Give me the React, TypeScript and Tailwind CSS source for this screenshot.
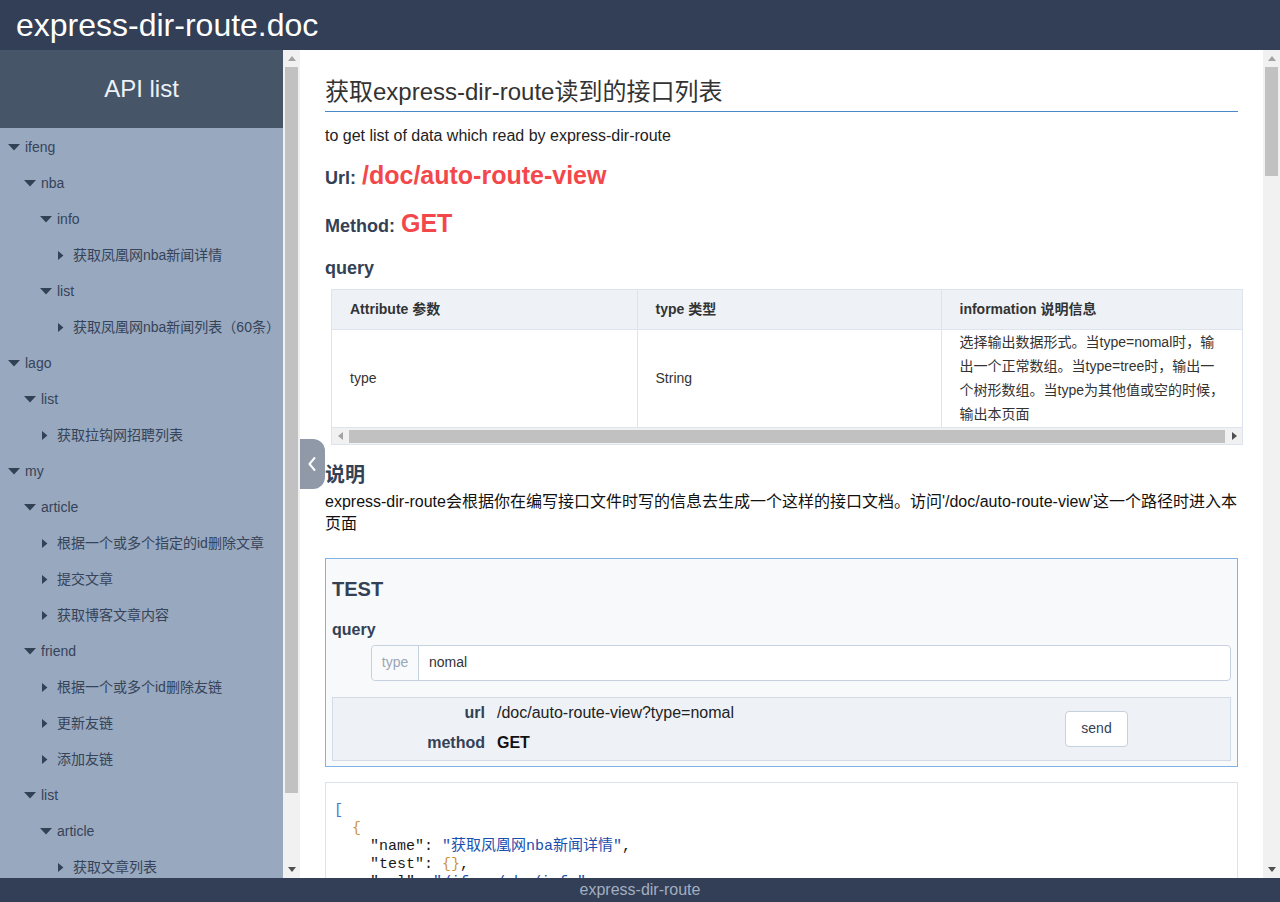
import React from "react";

const FONT = { fontFamily: '"Liberation Sans", Arial, "Noto Sans CJK SC", sans-serif' };
const MONO = { fontFamily: '"Liberation Mono", "Courier New", "Noto Sans CJK SC", monospace' };

type TreeItem = { label: string; level: number; open?: boolean };

const TREE: TreeItem[] = [
  { label: "ifeng", level: 0, open: true },
  { label: "nba", level: 1, open: true },
  { label: "info", level: 2, open: true },
  { label: "获取凤凰网nba新闻详情", level: 3 },
  { label: "list", level: 2, open: true },
  { label: "获取凤凰网nba新闻列表（60条）", level: 3 },
  { label: "lago", level: 0, open: true },
  { label: "list", level: 1, open: true },
  { label: "获取拉钩网招聘列表", level: 2 },
  { label: "my", level: 0, open: true },
  { label: "article", level: 1, open: true },
  { label: "根据一个或多个指定的id删除文章", level: 2 },
  { label: "提交文章", level: 2 },
  { label: "获取博客文章内容", level: 2 },
  { label: "friend", level: 1, open: true },
  { label: "根据一个或多个id删除友链", level: 2 },
  { label: "更新友链", level: 2 },
  { label: "添加友链", level: 2 },
  { label: "list", level: 1, open: true },
  { label: "article", level: 2, open: true },
  { label: "获取文章列表", level: 3 },
  { label: "friend", level: 2, open: true },
  { label: "获取友链列表", level: 3 },
];

const PAD = ["pl-[8px]", "pl-[24px]", "pl-[40px]", "pl-[56px]"];

const APIS = [
  { name: "获取凤凰网nba新闻详情", url: "/ifeng/nba/info", q: { id: "新闻id" } },
  { name: "获取凤凰网nba新闻列表（60条）", url: "/ifeng/nba/list", q: { page: "页码" } },
  { name: "获取拉钩网招聘列表", url: "/lago/list", q: { kd: "关键词", city: "城市" } },
  { name: "根据一个或多个指定的id删除文章", url: "/my/article/delete", q: { ids: "文章id" } },
  { name: "提交文章", url: "/my/article/submit", q: { title: "标题", content: "内容" } },
  { name: "获取博客文章内容", url: "/my/article/get", q: { id: "文章id" } },
  { name: "根据一个或多个id删除友链", url: "/my/friend/delete", q: { ids: "友链id" } },
  { name: "更新友链", url: "/my/friend/update", q: { id: "友链id", name: "名称" } },
  { name: "添加友链", url: "/my/friend/add", q: { name: "名称", href: "地址" } },
  { name: "获取文章列表", url: "/my/list/article", q: { page: "页码" } },
  { name: "获取友链列表", url: "/my/list/friend", q: {} },
].map((a) => ({
  name: a.name,
  test: {},
  url: a.url,
  method: "GET",
  query: a.q,
}));

const JSON_LINES = JSON.stringify(APIS, null, 2).split("\n");

function Line({ text }: { text: string }) {
  const out: React.ReactNode[] = [];
  const re = /("(?:[^"\\]|\\.)*")(\s*:)?|([\[\]])|([{}])|([^"\[\]{}]+)/g;
  let m: RegExpExecArray | null;
  let k = 0;
  while ((m = re.exec(text))) {
    if (m[1]) {
      if (m[2]) {
        out.push(<span key={k++} className="text-[#1a1a1a]">{m[1]}</span>);
        out.push(<span key={k++} className="text-[#1a1a1a]">{m[2]}</span>);
      } else {
        out.push(<span key={k++} className="text-[#1c4fae]">{m[1]}</span>);
      }
    } else if (m[3]) {
      out.push(<span key={k++} className="text-[#3f7fd4]">{m[3]}</span>);
    } else if (m[4]) {
      out.push(<span key={k++} className="text-[#cf9240]">{m[4]}</span>);
    } else {
      out.push(<span key={k++} className="text-[#1a1a1a]">{m[5]}</span>);
    }
  }
  return <div className="h-[18px] leading-[18px]">{out}</div>;
}

function Caret({ open }: { open?: boolean }) {
  return (
    <span className="w-[12px] mr-[5px] flex items-center shrink-0">
      {open ? (
        <svg width="12" height="7" viewBox="0 0 12 7">
          <polygon points="0,0 12,0 6,6.5" fill="#334155" />
        </svg>
      ) : (
        <svg width="12" height="11" viewBox="0 0 12 11" className="ml-[2px]">
          <polygon points="0,0 6.5,5.5 0,11" fill="#334155" />
        </svg>
      )}
    </span>
  );
}

// classic scrollbar drawing (vertical)
function VBar({ thumb }: { thumb: string }) {
  return (
    <div className="w-[17px] shrink-0 bg-[#f1f1f1] flex flex-col">
      <div className="h-[17px] flex items-center justify-center">
        <svg width="8" height="5" viewBox="0 0 8 5">
          <polygon points="0,5 8,5 4,0" fill="#a3a3a3" />
        </svg>
      </div>
      <div className={`mx-[2px] bg-[#c1c1c1] ${thumb}`} />
      <div className="flex-1" />
      <div className="h-[17px] flex items-center justify-center">
        <svg width="8" height="5" viewBox="0 0 8 5">
          <polygon points="0,0 8,0 4,5" fill="#505050" />
        </svg>
      </div>
    </div>
  );
}

export default function App() {
  return (
    <div className="h-[902px] flex flex-col overflow-hidden bg-white" style={FONT}>
      {/* header */}
      <header className="h-[50px] shrink-0 bg-[#323f56] flex items-center pl-[16px]">
        <span className="text-white text-[32px] leading-none">express-dir-route.doc</span>
      </header>

      <div className="flex-1 min-h-0 flex relative">
        {/* sidebar */}
        <aside className="w-[300px] shrink-0 flex">
          <div className="w-[283px] overflow-hidden bg-[#97a8bf]">
            <div className="h-[78px] bg-[#465568] flex items-center justify-center text-[24px] text-[#edf1f6]">
              API list
            </div>
            <ul className="pt-[1px]">
              {TREE.map((t, i) => (
                <li
                  key={i}
                  className={`h-[36px] flex items-center text-[14px] text-[#364359] whitespace-nowrap ${PAD[t.level]}`}
                >
                  <Caret open={t.open} />
                  <span>{t.label}</span>
                </li>
              ))}
            </ul>
          </div>
          <VBar thumb="h-[726px]" />
        </aside>

        {/* collapse tab */}
        <div className="absolute left-[300px] top-[389px] w-[25px] h-[50px] bg-[#8f99a8] rounded-r-[12px] flex items-center justify-center">
          <svg width="10" height="16" viewBox="0 0 10 16" className="mr-[2px]">
            <path d="M7.5 2 L2.5 8 L7.5 14" fill="none" stroke="#fff" strokeWidth="2" strokeLinecap="round" strokeLinejoin="round" />
          </svg>
        </div>

        {/* main */}
        <main className="flex-1 min-w-0 flex bg-white">
          <div className="flex-1 overflow-hidden">
            <div className="ml-[25px] w-[913px] pt-[26px] pb-[40px]">
              <h1 className="text-[24px] leading-[32px] pb-[3px] border-b border-[#4a8acb] text-[#333]">
                获取express-dir-route读到的接口列表
              </h1>
              <p className="mt-[14px] text-[16px] leading-[20px] text-[#222]">
                to get list of data which read by express-dir-route
              </p>
              <div className="mt-[11px] h-[32px] flex items-baseline font-bold">
                <span className="text-[18px] text-[#334155]">Url:</span>
                <span className="ml-[6px] text-[25px] text-[#f3484b]">/doc/auto-route-view</span>
              </div>
              <div className="mt-[16px] h-[32px] flex items-baseline font-bold">
                <span className="text-[18px] text-[#334155]">Method:</span>
                <span className="ml-[6px] text-[25px] text-[#f3484b]">GET</span>
              </div>
              <h3 className="mt-[19px] text-[18px] leading-[24px] font-bold text-[#334155]">query</h3>

              <div className="mt-[9px] ml-[6px] w-[912px] border border-[#dde4ed] overflow-hidden">
                <table className="w-full border-collapse text-[14px] text-[#333]">
                  <thead>
                    <tr className="h-[39px] bg-[#eef2f7] border-b border-[#dde4ed]">
                      <th className="w-[305px] px-[18px] text-left font-bold border-r border-[#dde4ed]">Attribute 参数</th>
                      <th className="w-[304px] px-[18px] text-left font-bold border-r border-[#dde4ed]">type 类型</th>
                      <th className="px-[18px] text-left font-bold">information 说明信息</th>
                    </tr>
                  </thead>
                  <tbody>
                    <tr className="h-[98px] border-b border-[#dde4ed]">
                      <td className="px-[18px] border-r border-[#dde4ed]">type</td>
                      <td className="px-[18px] border-r border-[#dde4ed]">String</td>
                      <td className="px-[18px] leading-[24px] whitespace-nowrap">
                        选择输出数据形式。当type=nomal时，输
                        <br />
                        出一个正常数组。当type=tree时，输出一
                        <br />
                        个树形数组。当type为其他值或空的时候，
                        <br />
                        输出本页面
                      </td>
                    </tr>
                  </tbody>
                </table>
                {/* horizontal scrollbar */}
                <div className="h-[16px] flex bg-[#f1f1f1]">
                  <div className="w-[16px] flex items-center justify-center">
                    <svg width="5" height="8" viewBox="0 0 5 8">
                      <polygon points="5,0 5,8 0,4" fill="#a3a3a3" />
                    </svg>
                  </div>
                  <div className="flex-1 mt-[2px] h-[13px] ml-[1px] mr-[1px] bg-[#c1c1c1]" />
                  <div className="w-[16px] flex items-center justify-center">
                    <svg width="5" height="8" viewBox="0 0 5 8">
                      <polygon points="0,0 0,8 5,4" fill="#505050" />
                    </svg>
                  </div>
                </div>
              </div>

              <h3 className="mt-[16px] text-[20px] leading-[28px] font-bold text-[#334155]">说明</h3>
              <p className="mt-[2px] text-[16px] leading-[22px] text-[#111]">
                express-dir-route会根据你在编写接口文件时写的信息去生成一个这样的接口文档。访问'/doc/auto-route-view'这一个路径时进入本页面
              </p>

              {/* test box */}
              <div className="mt-[23px] border border-[#7fb3e3] bg-[#f7f9fb] px-[6px] pt-[16px] pb-[5px]">
                <h3 className="text-[20px] leading-[28px] font-bold text-[#334155]">TEST</h3>
                <h4 className="mt-[16px] text-[16px] leading-[22px] font-bold text-[#334155]">query</h4>
                <div className="mt-[4px] ml-[39px] h-[36px] flex border border-[#c6d1df] rounded-[4px] bg-white text-[14px]">
                  <span className="w-[47px] flex items-center justify-center text-[#9ba6b6] bg-[#f8fafc] border-r border-[#c6d1df] rounded-l-[4px]">
                    type
                  </span>
                  <span className="flex items-center pl-[10px] text-[#333]">nomal</span>
                </div>
                <div className="mt-[16px] h-[64px] border border-[#d3dbe6] bg-[#eef1f6] flex items-center">
                  <div className="flex-1 self-start text-[16px]">
                    <div className="h-[30px] flex items-center">
                      <span className="w-[152px] text-right font-bold text-[#334155]">url</span>
                      <span className="ml-[12px] text-[#222]">/doc/auto-route-view?type=nomal</span>
                    </div>
                    <div className="h-[30px] flex items-center">
                      <span className="w-[152px] text-right font-bold text-[#334155]">method</span>
                      <span className="ml-[12px] font-bold text-[#111]">GET</span>
                    </div>
                  </div>
                  <button className="mr-[102px] w-[63px] h-[36px] bg-white border border-[#c6d1df] rounded-[4px] text-[14px] text-[#334155]">
                    send
                  </button>
                </div>
              </div>

              {/* result */}
              <div className="mt-[15px] border border-[#dde3ea] bg-white pl-[8px] pt-[19px] pb-[16px]">
                <pre className="text-[15px] whitespace-pre" style={MONO}>
                  {JSON_LINES.map((l, i) => (
                    <Line key={i} text={l} />
                  ))}
                </pre>
              </div>
            </div>
          </div>
          <VBar thumb="h-[109px]" />
        </main>
      </div>

      {/* footer */}
      <footer className="h-[24px] shrink-0 bg-[#323f56] flex items-center justify-center text-[16px] text-[#a3aec0]">
        express-dir-route
      </footer>
    </div>
  );
}
